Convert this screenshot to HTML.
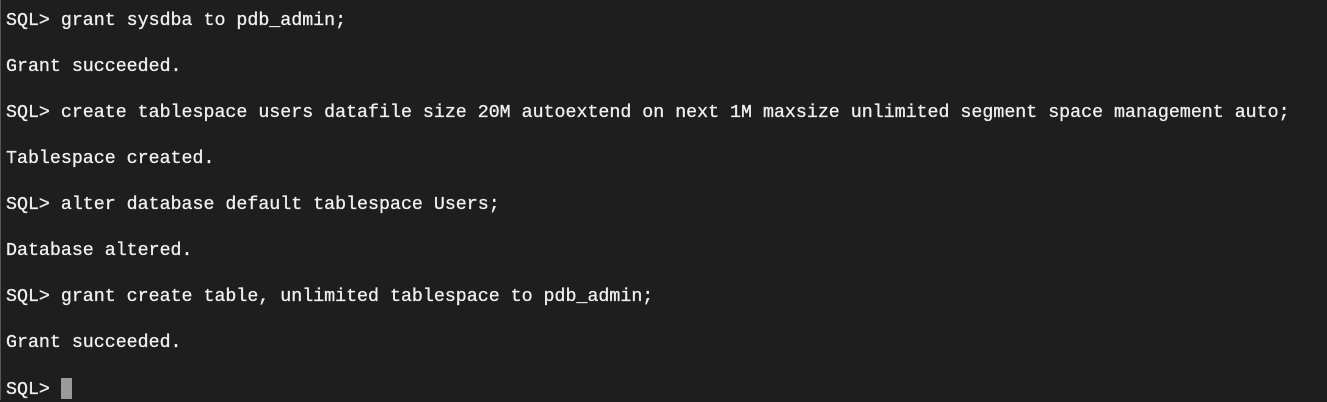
<!DOCTYPE html>
<html><head><style>
html,body{margin:0;padding:0;}
body{width:1327px;height:400px;background:#1e1e1e;overflow:hidden;position:relative;border-left:1px solid #555;box-sizing:border-box;}
pre{margin:0;position:absolute;left:5px;top:9.5px;font-family:"Liberation Mono",monospace;font-size:18.3px;line-height:23px;color:#f0f0f0;-webkit-text-stroke:0.3px #f0f0f0;}
.cur{display:inline-block;width:11px;height:21px;background:#9a9a9a;vertical-align:-5px;-webkit-text-stroke:0;}
</style></head><body>
<pre>SQL&gt; grant sysdba to pdb_admin;

Grant succeeded.

SQL&gt; create tablespace users datafile size 20M autoextend on next 1M maxsize unlimited segment space management auto;

Tablespace created.

SQL&gt; alter database default tablespace Users;

Database altered.

SQL&gt; grant create table, unlimited tablespace to pdb_admin;

Grant succeeded.

SQL&gt; <span class="cur"></span></pre>
</body></html>
